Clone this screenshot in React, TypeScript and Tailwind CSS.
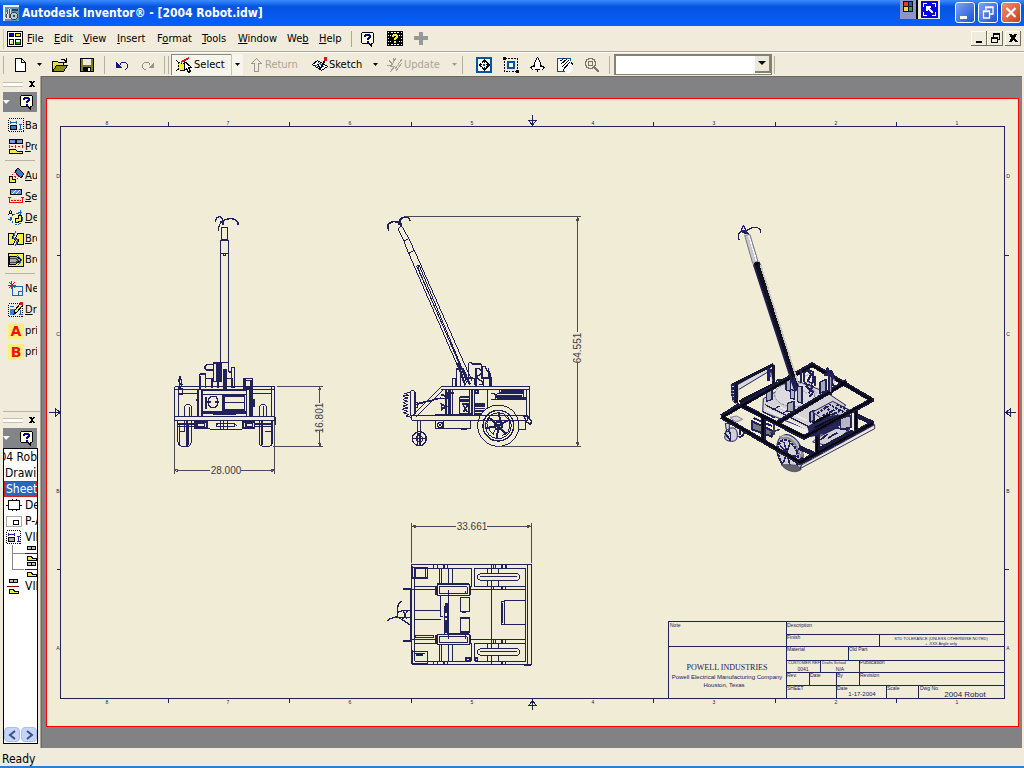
import type { ReactNode } from "react";

const INK = "#20205a";

/* ---------- Small icons ---------- */

function Svg({ w = 16, h = 16, children, className = "" }: { w?: number; h?: number; children: ReactNode; className?: string }) {
  return (
    <svg width={w} height={h} viewBox={`0 0 ${w} ${h}`} fill="none" shapeRendering="crispEdges" className={`shrink-0 ${className}`} aria-hidden="true">
      {children}
    </svg>
  );
}

const AppIcon = () => (
  <Svg>
    <rect width="16" height="16" fill="#5d93b5" />
    <path d="M0 0h16v2H0zM0 0h2v16H0z" fill="#e8f0f4" />
    <path d="M2 14l2-9 2-2 2 2 1 9z" fill="#d5dde0" />
    <path d="M3 13l2-8M7 13L6 4" stroke="#39596b" />
    <circle cx="11" cy="11" r="3.5" fill="#b8c8cd" stroke="#31454f" />
    <circle cx="11" cy="11" r="1" fill="#31454f" />
    <path d="M9 4h6v2H9z" fill="#263c66" />
  </Svg>
);

const DocIcon = () => (
  <Svg>
    <rect x="0.5" y="0.5" width="15" height="15" fill="#fff" stroke="#000" />
    <path d="M2.5 2.5h4v3h-4zM8.5 2.5h5v3h-5zM2.5 8.5h4v5h-4zM8.5 8.5h5v5h-5z" stroke="#000" fill="#fff" />
    <path d="M3 3h3v2H3z" fill="#00c" />
    <path d="M9 3h4v2H9zM4 10h2v3H4z" fill="#f3ec20" />
    <path d="M9 11h4v2H9z" fill="#0a0" />
  </Svg>
);

const HelpBubble = () => (
  <Svg>
    <path d="M2 1h11v1h1v10h-1v1h-1v3h-1l-3-3H2v-1H1V2h1z" fill="#000" />
    <path d="M2 2h11v10h-2v2l-2-2H2z" fill="#fffce0" />
    <path d="M4 4h1V3h5v1h1v3h-1v1H9v1H7V7h1V6h1V5H6v1H4zM7 10h2v2H7z" fill="#00009c" />
  </Svg>
);

const FilmHelp = () => (
  <Svg>
    <path d="M0 0h16v15H0z" fill="#000" />
    <path d="M1 1h1v1H1zM1 4h1v1H1zM1 7h1v1H1zM1 10h1v1H1zM1 13h1v1H1zM14 1h1v1h-1zM14 4h1v1h-1zM14 7h1v1h-1zM14 10h1v1h-1zM14 13h1v1h-1zM4 1h2v1H4zM7 1h2v1H7zM10 1h2v1h-2zM4 13h2v1H4zM7 13h2v1H7zM10 13h2v1h-2zM3 4h1v1H3zM12 4h1v1h-1zM3 10h1v1H3zM12 10h1v1h-1z" fill="#fff" />
    <path d="M5 5V4h1V3h4v1h1v3h-1v1H9v1H7V7h1V6h1V5H7v1H5zM7 10h2v2H7z" fill="#f5ee1e" />
  </Svg>
);

const NewIcon = () => (
  <Svg>
    <path d="M3.5 1.5h6l4 4v9h-10z" fill="#fff" stroke="#000" />
    <path d="M9.5 1.5v4h4" stroke="#000" />
  </Svg>
);

const OpenIcon = () => (
  <Svg>
    <path d="M0.5 13.5v-9h5l1 1h5v3" fill="#e8e04a" stroke="#000" />
    <path d="M0.5 14.5l4-6h11l-4 6z" fill="#8c8a1e" stroke="#000" />
    <path d="M9 2.5h3l2 2M14.5 1v4h-3" stroke="#000" />
  </Svg>
);

const SaveIcon = () => (
  <Svg>
    <path d="M1.5 1.5h13v13h-13z" fill="#7d7a20" stroke="#000" />
    <path d="M4 2h8v6H4z" fill="#f0ead8" />
    <path d="M4 10h8v4H4z" fill="#000" />
    <path d="M9 11h2v3H9z" fill="#f0ead8" />
  </Svg>
);

const UndoIcon = ({ redo = false }: { redo?: boolean }) => (
  <Svg className={redo ? "-scale-x-100" : ""}>
    <path d="M2 5v6h6z" fill={redo ? "#98968c" : "#14148c"} />
    <path d="M5.5 8.5l2-3h4l2 2v3l-2 2h-1" stroke={redo ? "#98968c" : "#14148c"} />
  </Svg>
);

const SelectIcon = () => (
  <Svg w={18}>
    <path d="M2 5l4 2 4-2v7l-4 2-4-2z" fill="#f5ee3a" stroke="#000" strokeDasharray="2 1" />
    <path d="M0 3l2 2M0 14l2-2" stroke="#000" />
    <path d="M5 5l8-4" stroke="#e01010" strokeWidth="1.5" />
    <path d="M8.5 4.5v9l2-2 2 4 2-1-2-4h3z" fill="#fff" stroke="#000" />
  </Svg>
);

const ReturnIcon = () => (
  <Svg>
    <path d="M5.5 14.5v-8h-3l5-5 5 5h-3v8z" stroke="#9a988e" />
  </Svg>
);

const SketchIcon = () => (
  <Svg>
    <path d="M0.5 7.5l5-4 10 6-6 4z" fill="#fff" stroke="#000" />
    <path d="M3 8l7 3M6 5l6 5" stroke="#1070c0" />
    <path d="M5.500 7l3 5M9 11l4-8" stroke="#000" strokeWidth="1.5" />
    <path d="M12 0h3v4h-3z" fill="#e01010" />
  </Svg>
);

const UpdateIcon = () => (
  <Svg>
    <path d="M9 1L4 9h4l-5 6M15 2L8 12M2 3l3 4M0 8h4M6 1v4M9 14l6-8" stroke="#a19f94" />
  </Svg>
);

const ZoomAllIcon = () => (
  <Svg>
    <rect x="1" y="1" width="14" height="14" fill="#fff" stroke="#0054a8" strokeWidth="2" />
    <path d="M5.5 5.5h5v5h-5z" stroke="#000" strokeDasharray="1 1" />
    <path d="M8 2l3 3H5zM8 14l3-3H5zM2 8l3-3v6zM14 8l-3-3v6z" fill="#000" />
    <path d="M7 7h2v2H7z" fill="#0054a8" />
  </Svg>
);

const ZoomWindowIcon = () => (
  <Svg>
    <path d="M1.5 1.5h13v13h-13z" stroke="#000" strokeDasharray="2 1" />
    <path d="M5 5h6v6H5z" fill="#fff" stroke="#0054a8" strokeWidth="2" />
    <path d="M0 0h3v3H0zM13 13h3v3h-3z" fill="#000" />
  </Svg>
);

const ZoomIcon = () => (
  <Svg>
    <path d="M7.5 0.5l3 5v4l4 3-4-1-3 3-3-3-4 1 4-3v-4z" fill="#fff" />
    <path d="M7.5 0.5l-3 5v4M7.5 0.5l3 5v4M4.5 8.5l-4 2 3 3M10.5 8.5l4 2-3 3M5 12.5h5M7.5 12v3" stroke="#000" />
  </Svg>
);

const PanIcon = () => (
  <Svg>
    <path d="M0.5 1.5h13v13h-13z" fill="#fff" stroke="#0054a8" />
    <path d="M4 6l4-4 6 2 2 4v5l-4 3H9z" fill="#fff" />
    <path d="M3 4l5-3M4 7l6-5M5 10l7-7M7 12l6-7M6 14l2-4M14 5l2 3" stroke="#000" />
  </Svg>
);

const LookIcon = () => (
  <Svg>
    <circle cx="6.5" cy="6.5" r="5" stroke="#777565" strokeWidth="1.5" />
    <path d="M4.5 4.5h4v4h-4z" stroke="#777565" />
    <path d="M10 10l5 5" stroke="#777565" strokeWidth="2.5" />
  </Svg>
);

const Caret = ({ dim = false }: { dim?: boolean }) => (
  <svg width="6" height="4" viewBox="0 0 6 4" className="shrink-0" aria-hidden="true">
    <path d="M0 0h5L2.5 3z" fill={dim ? "#a09e92" : "#000"} />
  </svg>
);

/* ---------- Panel icons ---------- */

const BaseIcon = () => (
  <Svg>
    <path d="M0.5 0.5h15v13h-15z" stroke="#000" strokeDasharray="1 1" />
    <path d="M2.5 7.5h6v4h-6z" fill="#2f7fd0" stroke="#000" />
    <path d="M2 4.5h7M2.5 3v3M8.500 3v3M12.5 6v6M11 6.5h3M11 11.5h3" stroke="#1464c0" />
  </Svg>
);
const ProjectedIcon = () => (
  <Svg>
    <path d="M1.5 0.5h6v4h-6zM8.500 0.5h6v4h-6z" fill="#6c9ae8" stroke="#000" />
    <path d="M1.5 6v3M7.5 6v3M14.5 6v3M3 7.5h2M10 7.5h2" stroke="#e01010" />
    <path d="M1.5 14.5v-4h6l2 2h5v2z" fill="#f5ee3a" stroke="#000" />
  </Svg>
);
const AuxiliaryIcon = () => (
  <Svg>
    <path d="M7 4l3-4 6 6-3 4z" fill="#2f7fd0" stroke="#000" />
    <path d="M4 6l6 5M6 4l5 5" stroke="#e01010" strokeDasharray="2 1" />
    <path d="M1.5 14.5v-6h3v3h3v3z" fill="#f5ee3a" stroke="#000" />
  </Svg>
);
const SectionIcon = () => (
  <Svg>
    <path d="M2.5 0.5h11v5h-11z" fill="#5b96e8" stroke="#000" />
    <path d="M4 5l4-4M8 5l4-4" stroke="#fff" />
    <path d="M3 10h10v2H3z" fill="#f5ee3a" />
    <path d="M1.5 8v5.5h13V8M0 8.500h3M13 8.500h3" stroke="#e01010" />
    <path d="M3 11.5h10" stroke="#e01010" strokeDasharray="2 1" />
  </Svg>
);
const DetailIcon = () => (
  <Svg>
    <circle cx="9" cy="9" r="5.5" fill="#fff8b0" stroke="#1464c0" strokeDasharray="3 1" />
    <path d="M7.5 12.5v-4h3v-3h3v6z" fill="#f5ee3a" stroke="#000" />
    <path d="M0.5 5l2-5 2 5M2 3.5h2" stroke="#000" />
    <path d="M0 9h4M2 7v4M10 2h4M12 0v4" stroke="#1464c0" />
  </Svg>
);
const BrokenIcon = () => (
  <Svg>
    <path d="M0.5 2.5h5l-1 5 3 1-2 5h-5zM9.5 2.5h6v11h-6l1-5-3-1z" fill="#f5ee3a" stroke="#000" />
    <path d="M7.5 0l-2 7 4 2-2 6" stroke="#1464c0" />
  </Svg>
);
const BreakOutIcon = () => (
  <Svg>
    <path d="M0.5 1.5h15v13h-15z" fill="#f5ee3a" stroke="#000" />
    <path d="M1 4h7l5 4-5 4H1z" fill="#aaa" stroke="#000" />
    <path d="M2 6.5h6l2 2-2 2H2" stroke="#444" />
    <path d="M9 3l5 5-4 5" stroke="#1464c0" />
  </Svg>
);
const NewSheetIcon = () => (
  <Svg>
    <path d="M4.5 5.5h10v9h-10zM10.5 14v-3.5h4" stroke="#1464c0" />
    <path d="M3.5 0v8M0 4h8M1 1l6 6M7 1L1 7" stroke="#e01010" />
  </Svg>
);
const DraftIcon = () => (
  <Svg>
    <path d="M0.5 1.5h14v13h-14z" stroke="#000" strokeDasharray="1 1" />
    <path d="M2 7h5v6H2z" fill="#2f7fd0" />
    <path d="M2 4.5h4M12.5 8v5M11 12.5h4" stroke="#1464c0" />
    <path d="M6 12l1-4 6-7 2 2-6 7z" fill="#f5ee3a" stroke="#000" />
    <path d="M12 0h3v3h-3z" fill="#e01010" />
  </Svg>
);
const LetterIcon = ({ letter }: { letter: string }) => (
  <span className="flex h-4 w-4 shrink-0 items-center justify-center bg-[#fbf07e] font-['DejaVu_Sans',sans-serif] text-[14px] leading-4 font-bold text-[#f01010]">{letter}</span>
);

const SheetBorderIcon = () => (
  <Svg h={12}>
    <path d="M2.5 1.5h11v9h-11z" fill="#fff" stroke="#000" strokeWidth="1" />
    <path d="M0 6h3M13 6h3M6 0v2M10 0v2M6 10v2M10 10v2" stroke="#000" />
  </Svg>
);
const TitleBlockIcon = () => (
  <Svg h={12}>
    <path d="M0.5 1.5h15v10h-15z" stroke="#aaa" fill="#fff" />
    <path d="M7.5 5.5h5v4h-5z" stroke="#000" />
  </Svg>
);
const ViewIcon = () => (
  <Svg h={14}>
    <path d="M0.5 0.5h14v13h-14z" stroke="#000" strokeDasharray="1 1" />
    <path d="M2.5 7.5h6v4h-6z" fill="#aaa" stroke="#000" />
    <path d="M2 4.5h7M2.5 3v3M8.500 3v3M12.5 6v6M11 6.5h3M11 11.5h3" stroke="#2020b0" />
  </Svg>
);
const ChildViewIcon = () => (
  <Svg w={12} h={16}>
    <path d="M2.5 1.5h4v3h-4zM6.5 1.5h4v3h-4z" fill="#bbb" stroke="#000" />
    <path d="M0 8.500h12" stroke="#800010" />
    <path d="M2.5 15.5v-4h4l1 2h4v2z" fill="#f5ee1e" stroke="#000" />
  </Svg>
);

/* ---------- Chrome ---------- */

function TitleBar() {
  return (
    <header className="flex h-[26px] shrink-0 items-center bg-linear-to-b from-[#3a8cff] via-[#0553e0] via-25% to-[#0560fa] pr-[3px] pl-[3px]">
      <AppIcon />
      <h1 className="ml-[3px] font-['DejaVu_Sans_Condensed','Noto_Sans',sans-serif] text-[12px] leading-4 font-bold whitespace-nowrap text-white">
        Autodesk Inventor® - [2004 Robot.idw]
      </h1>
      <div className="ml-auto flex h-full items-start">
        <div className="flex h-[19px] w-4 items-start justify-center bg-[#8897cf] pt-px">
          <Svg w={10} h={11}>
            <path d="M0 0h10v11H0z" fill="#111" />
            <path d="M1 1h4v4H1z" fill="#e03c24" />
            <path d="M6 1h3v4H6z" fill="#2458d0" />
            <path d="M1 6h4v4H1z" fill="#f5d830" />
            <path d="M6 6h3v4H6z" fill="#30a040" />
          </Svg>
        </div>
        <button aria-label="Capture" className="mr-[11px] flex h-[19px] w-6 items-center justify-center border-l-2 border-black bg-[#ece9d8] pl-px">
          <Svg w={17} h={17}>
            <path d="M0 0h17v17H0z" fill="#0808dc" />
            <path d="M2.5 6v-3.5h3.5M11 2.5h3.5v3.5M2.5 11v3.5h3.5M11 14.5h3.5v-3.5M6 10V6h4M6 6l6 6" stroke="#fff" strokeWidth="1.5" />
          </Svg>
        </button>
        <div className="flex gap-[3px] pt-[2px] pl-1">
          <button aria-label="Minimize" className="h-[21px] w-5 rounded-[3px] border border-white bg-linear-to-br from-[#7ba4f4] to-[#1d4fd0]">
            <svg viewBox="0 0 18 19"><path d="M4 13h7v3H4z" fill="#fff" /></svg>
          </button>
          <button aria-label="Restore" className="h-[21px] w-5 rounded-[3px] border border-white bg-linear-to-br from-[#7ba4f4] to-[#1d4fd0]">
            <svg viewBox="0 0 18 19" fill="none"><path d="M7 7V4h7v7h-3M6 4.500h8M4.5 8h6v7h-6zM4 8.500h7" stroke="#fff" strokeWidth="1.300" /></svg>
          </button>
          <button aria-label="Close" className="h-[21px] w-5 rounded-[3px] border border-white bg-linear-to-br from-[#f0906c] to-[#d03a14]">
            <svg viewBox="0 0 18 19"><path d="M4.5 5l9 9M13.5 5l-9 9" stroke="#fff" strokeWidth="2.200" /></svg>
          </button>
        </div>
      </div>
    </header>
  );
}

const menus: [string, string, string, string][] = [
  ["", "F", "ile", "w-[27px]"],
  ["", "E", "dit", "w-[29px]"],
  ["", "V", "iew", "w-[34px]"],
  ["", "I", "nsert", "w-10"],
  ["F", "o", "rmat", "w-[45px]"],
  ["", "T", "ools", "w-9"],
  ["", "W", "indow", "w-[49px]"],
  ["We", "b", "", "w-8"],
  ["", "H", "elp", "w-8"],
];

function MenuBar() {
  return (
    <div className="flex h-[26px] shrink-0 items-center border-b border-[#aca899] pr-[3px] pl-[3px]">
      <span className="mr-[3px] h-5 w-px bg-[#c9c5b2]" />
      <DocIcon />
      <nav className="ml-1 flex">
        {menus.map(([a, u, b, w]) => (
          <button key={a + u + b} className={`${w} text-left whitespace-nowrap`}>
            {a}<u>{u}</u>{b}
          </button>
        ))}
      </nav>
      <span className="mr-2 h-4 w-px bg-[#aca899]" />
      <div className="flex items-center gap-[11px]">
        <button aria-label="Help topics"><HelpBubble /></button>
        <button aria-label="Show me"><FilmHelp /></button>
        <button aria-label="Add">
          <Svg w={15} h={15}><path d="M5 1h4v4h5v4H9v5H5V9H0V5h5z" fill="#98979c" /></Svg>
        </button>
      </div>
      <div className="ml-auto flex">
        {[
          ["Minimize drawing", "M3 9h6v2H3z"],
          ["Restore drawing", "M4 1h7v7H9v3H2V5h2zM5 3v2h4v2h1V3zM3 7v3h5V7z"],
          ["Close drawing", "M2 2h3l1 2 1-2h3L8 6l3 4H8L6 8l-1 2H2l2-4z"],
        ].map(([label, d], i) => (
          <button key={label} aria-label={label} className={`flex h-[15px] w-4 items-center justify-center border-r border-b border-[#716f64] bg-[#f0ecdc] shadow-[inset_1px_1px_#fff] ${i === 2 ? "ml-[2px]" : ""}`}>
            <Svg w={12} h={12}><path d={d} fill="#000" fillRule="evenodd" /></Svg>
          </button>
        ))}
      </div>
    </div>
  );
}

const Sep = ({ className = "" }: { className?: string }) => <span className={`h-[18px] w-px shrink-0 bg-[#b5b1a0] ${className}`} />;

function ToolBar() {
  return (
    <div className="flex h-6 shrink-0 items-center overflow-hidden border-t border-white pr-[3px] pl-[3px]">
      <Sep className="mr-2" />
      <button aria-label="New"><NewIcon /></button>
      <button aria-label="New options" className="ml-[9px]"><Caret /></button>
      <button aria-label="Open" className="ml-[9px]"><OpenIcon /></button>
      <button aria-label="Save" className="ml-[11px]"><SaveIcon /></button>
      <Sep className="ml-[9px]" />
      <button aria-label="Undo" className="ml-[9px]"><UndoIcon /></button>
      <button aria-label="Redo" className="ml-[10px]"><UndoIcon redo /></button>
      <Sep className="ml-2" />
      <Sep className="ml-[3px]" />
      <button className="ml-[2px] flex h-[21px] w-[60px] items-center border-t border-l border-[#8e8b7e] bg-[#f8f5ec] pl-1">
        <SelectIcon />Select
      </button>
      <button aria-label="Select options" className="flex h-[21px] w-3 items-center justify-center border-l border-[#c9c5b2] bg-[#f8f5ec]"><Caret /></button>
      <button className="ml-[6px] flex w-[61px] items-center text-[#a8a598]"><ReturnIcon />Return</button>
      <button className="ml-[2px] flex w-[61px] items-center gap-px"><SketchIcon />Sketch</button>
      <button aria-label="Sketch options"><Caret /></button>
      <button className="ml-2 flex w-[65px] items-center gap-px text-[#a8a598]"><UpdateIcon />Update</button>
      <button aria-label="Update options"><Caret dim /></button>
      <Sep className="ml-1" />
      <div className="ml-[13px] flex gap-[11px]">
        <button aria-label="Zoom all"><ZoomAllIcon /></button>
        <button aria-label="Zoom window"><ZoomWindowIcon /></button>
        <button aria-label="Zoom"><ZoomIcon /></button>
        <button aria-label="Pan"><PanIcon /></button>
        <button aria-label="Zoom selected"><LookIcon /></button>
      </div>
      <Sep className="ml-[9px]" />
      <div className="relative ml-1 h-[21px] w-[158px]">
        <select aria-label="Style" className="h-full w-full appearance-none border-t-2 border-l-2 border-r border-b border-[#85826f] bg-white">
          <option></option>
        </select>
        <span className="pointer-events-none absolute top-[2px] right-px flex h-[17px] w-4 items-center justify-center border-r-2 border-b-2 border-[#85826f] bg-[#ece9d8]">
          <svg width="8" height="5" viewBox="0 0 8 5" aria-hidden="true"><path d="M0 0h8L4 4z" fill="#000" /></svg>
        </span>
      </div>
      <Sep className="ml-[2px]" />
    </div>
  );
}

function PanelHead({ name }: { name: string }) {
  return (
    <>
      <div className="flex h-4 items-center justify-between">
        <span className="h-[5px] w-5 border-y border-[#c5c1ae] bg-white" />
        <button aria-label={`Close ${name}`} className="mr-[2px]">
          <Svg w={6} h={6}><path d="M0 0h2l1 1 1-1h2L4 3l2 3H4L3 5 2 6H0l2-3z" fill="#000" /></Svg>
        </button>
      </div>
      <div className="flex h-5 shrink-0 items-center justify-between bg-[#83838a]">
        <svg width="8" height="5" viewBox="0 0 8 5" aria-hidden="true"><path d="M0 0h7L3 4z" fill="#fff" /></svg>
        <button aria-label={`${name} help`} className="mr-[2px]"><HelpBubble /></button>
      </div>
    </>
  );
}

const Rule = () => <hr className="mx-[2px] mt-[3px] mb-1 border-t border-[#b9b5a4]" />;

function Tool({ icon, u = "", rest }: { icon: ReactNode; u?: string; rest: string }) {
  return (
    <button className="flex h-[21px] w-full items-center gap-px overflow-hidden pl-[5px] whitespace-nowrap">
      {icon}<span><u>{u}</u>{rest}</span>
    </button>
  );
}

function SidePanels() {
  return (
    <aside className="flex w-[41px] shrink-0 flex-col border-r border-[#a8a594] pl-[3px]">
      <section className="flex h-[336px] flex-col border-b border-[#b9b5a4] pr-[3px]">
        <PanelHead name="Drawing views" />
        <div className="pt-[3px]">
          <Tool icon={<BaseIcon />} rest="Base" />
          <Tool icon={<ProjectedIcon />} u="P" rest="roj" />
          <Rule />
          <Tool icon={<AuxiliaryIcon />} u="A" rest="ux" />
          <Tool icon={<SectionIcon />} u="S" rest="ect" />
          <Tool icon={<DetailIcon />} u="D" rest="et" />
          <Tool icon={<BrokenIcon />} u="B" rest="rok" />
          <Tool icon={<BreakOutIcon />} rest="Brea" />
          <Rule />
          <Tool icon={<NewSheetIcon />} rest="New" />
          <Tool icon={<DraftIcon />} u="D" rest="raft" />
          <Tool icon={<LetterIcon letter="A" />} rest="prin" />
          <Tool icon={<LetterIcon letter="B" />} rest="prin" />
        </div>
      </section>
      <section className="flex flex-1 flex-col pr-[3px] pb-1">
        <PanelHead name="Browser" />
        <div className="flex w-[35px] flex-1 flex-col border border-black bg-white text-[12px] leading-4 whitespace-nowrap">
          <div className="flex-1 overflow-hidden">
            <div className="flex h-4 justify-end"><span>04 Rob</span></div>
            <div className="h-4 pl-px">Drawin</div>
            <div className="h-4 border border-[#d02020] bg-[#2568c0] pl-px leading-[14px] text-white">Sheet</div>
            <div className="flex h-4 items-center gap-[3px] pl-[2px]"><SheetBorderIcon />Def</div>
            <div className="flex h-4 items-center gap-[3px] pl-[2px]"><TitleBlockIcon />P-A</div>
            <div className="flex h-4 items-center gap-[3px] pl-[2px]"><ViewIcon />VIE</div>
            <div className="ml-2 w-3 border-b border-l border-[#888]">
              <div className="flex h-4"><span className="w-3 shrink-0 self-center border-t border-[#888]" /><ChildViewIcon /></div>
              <div className="flex h-2 pl-3"><ChildViewIcon /></div>
            </div>
            <div className="mt-2 flex h-4 items-center gap-[6px] pl-[3px]"><ChildViewIcon />VIE</div>
          </div>
          <div className="flex h-4 gap-px">
            {["M10 3L5 7l5 4", "M5 3l5 4-5 4"].map((d, i) => (
              <button key={d} aria-label={i ? "Scroll right" : "Scroll left"} className="flex h-[15px] flex-1 items-center justify-center rounded-sm border border-[#a9bff0] bg-[#c4d4fb]">
                <svg width="14" height="14" viewBox="0 0 14 14" fill="none"><path d={d} stroke="#405078" strokeWidth="2" /></svg>
              </button>
            ))}
          </div>
        </div>
      </section>
    </aside>
  );
}

/* ---------- Drawing ---------- */

const columnNumbers: [number, string][] = [[107, "8"], [228, "7"], [350, "6"], [472, "5"], [593, "4"], [714, "3"], [836, "2"], [957, "1"]];
const columnTicks = [168, 289, 411, 653, 775, 896];
const rowLetters: [number, string][] = [[176, "D"], [334, "C"], [491, "B"], [648, "A"]];
const rowTicks = [255, 569];

function Border() {
  return (
    <g stroke={INK}>
      <path d="M60.5 126.5h944v572h-944z" />
      {columnTicks.map((x) => <path key={x} d={`M${x}.5 122v4M${x}.5 699v4`} />)}
      {rowTicks.map((y) => <path key={y} d={`M57 ${y}.5h4M1005 ${y}.5h4`} />)}
      <path d="M532.5 115v11M529 120.5h7l-3.5 5zM532.5 698v12M529 705.5h7l-3.5-5zM49 412.5h11M55.5 409v7l5-3.5zM1004 412.5h12M1010.5 409v7l-5-3.5z" />
      <g stroke="none" fill={INK} fontSize="5" textAnchor="middle">
        {columnNumbers.map(([x, n]) => <text key={n} x={x} y="125">{n}</text>)}
        {columnNumbers.map(([x, n]) => <text key={n} x={x} y="704">{n}</text>)}
        {rowLetters.map(([y, n]) => <text key={n} x="58" y={y + 2}>{n}</text>)}
        {rowLetters.map(([y, n]) => <text key={n} x="1008" y={y + 2}>{n}</text>)}
      </g>
    </g>
  );
}

const smallLabels: [number, number, string][] = [
  [670, 627, "Note"], [787, 627, "Description"], [787, 639, "Finish"], [787, 651, "Material"], [849, 651, "Old Part"],
  [860, 664, "Publication"], [787, 677, "Rev."], [810, 677, "Date"],
  [837, 677, "By"], [860, 677, "Revision"], [787, 690, "SHEET"], [837, 690, "Date"], [887, 690, "Scale"], [920, 690, "Dwg No."],
];

function TitleBlock() {
  return (
    <g>
      <path
        stroke={INK}
        d="M668.5 698v-76.5h336M786.5 621v77M786 634.5h218M668 646.5h336M786 660.5h218M786 672.5h218M786 685.5h218M879.5 634v12M848.5 646v14M820.5 660v12M859.5 660v25M809.5 672v13M836.5 672v26M886.5 685v13M918.5 685v13"
      />
      <g fill={INK}>
        <g fontSize="5">
          {smallLabels.map(([x, y, t]) => <text key={`${x}-${y}`} x={x} y={y}>{t}</text>)}
        </g>
        <g fontSize="4">
          <text x="788" y="664">CUSTOMER REF</text>
          <text x="822" y="664">Drafts School</text>
        </g>
        <g textAnchor="middle">
          <g fontSize="4">
            <text x="941" y="640">STD TOLERANCE (UNLESS OTHERWISE NOTED)</text>
            <text x="941" y="645">+ .XXX  Angle only</text>
          </g>
          <g fontSize="5">
            <text x="803" y="671">0041</text>
            <text x="840" y="671">N/A</text>
          </g>
          <text x="727" y="670" fontSize="8" fontFamily="'Liberation Serif', serif">POWELL INDUSTRIES</text>
          <text x="727" y="679" fontSize="6">Powell Electrical Manufacturing Company</text>
          <text x="724" y="687" fontSize="6">Houston, Texas</text>
          <text x="862" y="696" fontSize="6">1-17-2004</text>
          <text x="965" y="697" fontSize="8">2004 Robot</text>
        </g>
      </g>
    </g>
  );
}

/* Each view is drawn on a grid three times finer than the sheet. */
function FrontView() {
  return (
    <g transform="translate(150 200) scale(0.33333)" stroke={INK} strokeWidth="3">
      <path d="M197 66c-1-18 16-20 21-8l3 18M206 94c-2-22 10-36 36-38 18 0 23 8 23 20M212 62l8 14M263 68v8" strokeWidth="4" />
      <path d="M215 82h17v38h-17zM211 121h25v40h-25zM211 161v326h25V161M220 162h8v4h-8z" />
      <path d="M170 494h20v16h-20l-5-4v-8zM190 489h10v56h-10zM200 489h8v54h-8zM208 487h28v30M213 487v58" strokeWidth="4" />
      <path d="M148 566v-38q0-6 6-6h12v42M150 530v36M168 535h18v30M186 545h18v20M222 508h8v56h-8zM236 516h8v48M244 503h9v60h-9zM232 536h14v28M282 536h26v28h-26zM287 541h16v22" strokeWidth="4" />
      <path d="M150 528v38M224 510v52M285 538v24M204 490v54" strokeWidth="6" />
      <path d="M90 530l-4 14 4 6-2 16 8-12-2-14zM86 566h12v18H86z" strokeWidth="4" />
      <path d="M74 560h300v101H74zM86 560v90M364 560v90M74 568h300M86 580h54M310 580h54M74 650h300v12H74z" />
      <path d="M142 570v78M146 570v78M156 570v78M290 570v78M300 570v78M306 570v78" strokeWidth="4" />
      <path d="M156 572h134M158 584h132v50H158zM168 590v36M176 596l8-7h14l4 10v16l-6 8h-12l-8-6zM172 606h10M196 606h10M218 584v50M222 588h62v42h-62zM222 608h62M160 640h130M190 634v8h66v-8M306 600h6v20M138 600h8v20" strokeWidth="4" />
      <path d="M158 636h132" strokeWidth="5" />
      <path d="M104 650v-28q0-9 10-9t10 9v28M118 620v28M328 650v-28q0-9 11-9t11 9v28M340 618v30" />
      <path d="M84 662v65q0 12 10 12h20q10 0 10-12v-65M90 668v68M112 668v66M116 668v68M104 664v30H88M328 662v65q0 12 10 12h18q12 0 12-12v-65M334 668v68M338 668v68M364 664v70M344 694h20v44" />
      <path d="M110 664v74M336 664v72" strokeWidth="6" />
      <path d="M84 672h56M84 680h50M314 672h50M314 680h50M136 666h34v18h-34zM142 670h22v10h-22zM280 666h34v18h-34zM288 670h20v10h-20z" strokeWidth="5" />
      <path d="M172 664v20l18 6h80l10-6M200 670h54v10h-54zM212 662v28M222 662v28M234 662v28M198 676l10-6h40l12 6" />
      <path d="M374 650v24" strokeWidth="6" />
      <g stroke="#4b4b55">
        <path d="M74 664v158M374 664v158M80 811h100M272 811h96M380 560h139M370 740h149M509 564v44M509 694v42" />
        <path d="M74 811l10-4v8zM374 811l-10-4v8zM509 560l-3 10h6zM509 740l-3-10h6z" />
      </g>
    </g>
  );
}

function SideView() {
  return (
    <g transform="translate(370 200) scale(0.33333)" stroke={INK} strokeWidth="3">
      <path d="M57 92c-12-20 8-32 26-25l9 9M86 75c0-26 32-32 34-13M88 58l6 18" strokeWidth="5" />
      <path d="M84 86l10-10 22 39-14 9zM102 124l14-9 17 36-17 10zM116 160l17-9 173 392M116 160l152 350 16 46" />
      <path d="M140 198l7-3 146 350M140 198l140 320M147 195l-3 9 136 316 10 30" />
      <path d="M264 490l22 66M278 504l22 50" strokeWidth="6" />
      <path d="M248 536h10v24h-10zM260 508h12v52h-12z" strokeWidth="5" />
      <path d="M296 488h8l4 4h24l4 8h10l4 10 10 10 4 16v20M296 488v44h12M316 508q10-8 16 2t-6 16 6 16-6 12M336 500v34h20V504M340 538v20M318 504v54M292 536h22v20" strokeWidth="4" />
      <path d="M356 514l6 26v18" strokeWidth="8" />
      <path d="M214 560h266M214 568h266M214 560L125 648M222 568L140 650M480 560v100M470 568v80" />
      <path d="M125 648h348v13H125zM196 643h110v5M235 568v78M247 568v78M304 568v78M314 568v78M352 568v60M268 590v52h36M300 568v78M308 568v78" />
      <path d="M270 592h30M270 600h30M270 604h30M276 612h20v30M280 616l12 20M292 616l-12 20M316 570h8v10h-8zM316 612h28M316 618h28M316 626h28M316 634h26M316 642h20" strokeWidth="5" />
      <path d="M228 570v74M214 584l18 6M212 596h20v-20M214 612l16 8-14 8zM188 600l26-6M140 612l50-12M238 580h14M240 570v74" strokeWidth="5" />
      <path d="M122 572h11v75h-11zM122 578l-20 2 14 6-18 2 16 6-16 4 16 6-16 4 16 6-16 4 16 6-18 4 18 6-14 4 18 6-10 4 14 4M134 604l10 4v14l-10 4M138 614l24-6" strokeWidth="3" />
      <path d="M136 576v66" strokeWidth="5" />
      <path d="M364 600h104M364 582h12v18M388 570h72v8h-72zM372 584l16-4h72v20" />
      <path d="M392 574h66M376 590h80M396 596h70M380 596h88" strokeWidth="8" />
      <circle cx="385" cy="677" r="62" />
      <circle cx="385" cy="677" r="46" strokeWidth="4" />
      <circle cx="385" cy="677" r="39" />
      <circle cx="385" cy="677" r="11" strokeWidth="6" />
      <path d="M385 677l-28-24M385 677l30-16M385 677l24 26M385 677l-4 38M385 677l-38 8M386 640l8 34" strokeWidth="6" />
      <path d="M360 650l-10 20 8 20 16 16M402 646l18 18-4 30-20 14M378 684l-10 22M394 684l10 18M446 662h20v28h-18" />
      <path d="M462 648l8 18 12 8 2-10-10-14z" strokeWidth="4" />
      <path d="M196 662v24h106v-24M204 668h14v14h-14zM206 670l10 10M216 670l-10 10M222 662v22M274 686h16v3h-16z" />
      <path d="M143 662v72M152 662v72M145 700l8 36" />
      <circle cx="148" cy="716" r="21" strokeWidth="4" />
      <circle cx="148" cy="716" r="10" />
      <path d="M129 716h38M148 698v38" strokeWidth="4" />
      <g stroke="#4b4b55">
        <path d="M106 49h526M380 740h252M623 54v342M623 486v248" />
        <path d="M623 50l-3 12h6zM623 739l-3-12h6z" />
      </g>
    </g>
  );
}

function IsometricView() {
  return (
    <g transform="translate(700 210) scale(0.33333)" stroke={INK} strokeWidth="3" strokeLinejoin="round">
      <path d="M117 90c-8-24 16-38 30-16M138 66c18-22 44-16 44 2M125 56l6-8 10 22-14-2z" strokeWidth="4" />
      <path d="M134 76l16-2 24 80-16 6z" fill="#c9c7cb" stroke="#77768a" />
      <path d="M146 76l24 78" stroke="#f1f0f1" strokeWidth="4" />

      {/* rear bumper */}
      <path d="M94 524h14v56l-10-8zM102 530l118-66v12l-106 64" fill="#d9d8df" />
      <path d="M96 526l124-62M118 576l110-56M220 464v58M108 522v58" stroke="#15152c" strokeWidth="10" />
      <path d="M94 526h10M92 536h12M92 546h12M94 556h10M96 566h10M206 474v40M213 478v24" strokeWidth="7" />
      <path d="M124 588l130-72" strokeWidth="8" />
      <path d="M116 530v36M212 488l4 24" stroke="#c9c8d0" />

      {/* deck and machinery */}
      <path d="M190 566l98-54 90 34 60 40-120 70-130-50z" fill="#d6d3d5" />
      <ellipse cx="284" cy="554" rx="60" ry="36" fill="#dddae0" stroke="#7b7a8c" strokeDasharray="8 4" />
      <path d="M196 596l128 62M196 612l96 50M230 586l90 46" stroke="#e9e7e5" strokeWidth="6" />
      <path d="M196 584l130 66M244 612l26-14M218 600l20-12M188 604l36 20" strokeWidth="4" />
      <path d="M200 540l16-4v32l-16 6zM258 504l14 4v36l-14-4zM360 516l18-8v34l-18 8zM262 580l20-6v30h-20zM330 606l12-4v30l-12 4z" fill="#a9aab8" strokeWidth="4" />
      <path d="M312 490q14-16 26-4l2 30-18 10-10-12zM322 482l12 10-10 20 14 18-12 20M316 528l24 18-12 16M304 488v30M346 498v30M228 512l28-4M232 520l30-6" strokeWidth="6" />
      <path d="M314 500l12-8M320 516l14 8M308 540l12 10M340 536l10 14" stroke="#bdbcc6" strokeWidth="4" />
      <path d="M338 606l60-32 58 30-66 40z" fill="#c8c6cb" />
      <path d="M352 610l40-26M368 618l46-24M384 620l40-20M396 588l34 18M374 590l40 28M410 584l36 18" strokeWidth="6" strokeDasharray="7 4" />
      <path d="M324 650l50-30 60-6 20 10-70 44-54 12z" fill="#252556" />
      <path d="M338 640l54-28M344 654l70-34M364 656l70-40" stroke="#0c0c16" strokeWidth="7" />
      <path d="M350 684l60-30 40 4-64 50-48-12z" fill="#d1cfd2" />
      <path d="M362 690l20-18M384 684l28-16M400 652l44 8M420 624l34-8v36l-32 6z" fill="#b7b5bf" strokeWidth="5" />
      <path d="M156 634l60 28v18l-60-22zM160 624l56 24" fill="#77777e" strokeWidth="6" />
      <path d="M200 620l30 16M210 668l30-10M222 636v40" stroke="#3b3b4c" strokeWidth="5" />
      <path d="M276 646l46 22" stroke="#efedee" strokeWidth="8" />

      {/* casters */}
      <path d="M76 640h12v22l-8 4zM92 654q18-4 20 18t-16 22-22-10l4-22z" fill="#d2d1d6" />
      <path d="M84 662q12 8 6 30M74 668l18 24M116 654l20 6-8 18-12 4M120 656v20" strokeWidth="5" />
      <path d="M90 622l20-4 18 10-20 8z" fill="#d5d3d3" stroke="#84838e" />

      {/* main wheel */}
      <ellipse cx="270" cy="728" rx="37" ry="56" transform="rotate(-20 270 728)" fill="#bbb9c0" />
      <ellipse cx="264" cy="734" rx="28" ry="46" transform="rotate(-20 264 734)" fill="#d4d1d3" strokeWidth="7" strokeDasharray="9 3" />
      <path d="M240 706l50 54M252 696l18 70M238 730l56 10M250 760l20-60" strokeWidth="5" />
      <path d="M240 684c30-14 62 24 66 62" stroke="#8c8b96" strokeWidth="11" />
      <path d="M246 680c28-10 52 24 56 52" stroke="#dfdee1" strokeWidth="3" />
      <path d="M244 764c10 16 42 30 60 14l-14-12-26-2z" fill="#62616c" stroke="#55545f" />

      {/* frame */}
      <path d="M300 776l224-120v-12L306 764z" fill="#e8e6ea" stroke="#33334e" />
      <g stroke="#1b1b42" strokeWidth="14">
        <path d="M64 620L336 464L516 570L312 682L120 584" />
        <path d="M64 620l236 138L520 638" />
        <path d="M120 584l-56 36M230 640L440 514M190 618v78M352 674v58M468 600v66M300 758l10-14M468 616l52 24M390 480v76" />
        <path d="M296 712l46 20M360 718l100-54" />
      </g>
      <g stroke="#08080c" strokeWidth="6">
        <path d="M66 621L338 466L514 570L314 681L122 585" />
        <path d="M68 622l232 135L518 640M232 640L440 516M190 622v70M352 680v48M468 604v56" />
      </g>
      <path d="M380 474l8 10v60M394 484l6 10-4 22 6 14M372 494h26" strokeWidth="7" />
      <path d="M392 500v46M402 506v16" stroke="#c7c6d0" />

      {/* mast */}
      <path d="M178 156l120 380-14 8L160 164z" fill="#111118" />
      <path d="M162 164l124 376" stroke="#1d1d55" strokeWidth="4" />
      <path d="M182 166l112 352" stroke="#c7c5c5" strokeWidth="5" />
      <path d="M164 162l12-4" stroke="#000" strokeWidth="8" />
      <path d="M292 530h14v50l-14-6zM272 538l12 4v26l-12-4z" fill="#b6b7c6" strokeWidth="4" />
      <path d="M280 500l10 40M302 480v24" strokeWidth="6" />
    </g>
  );
}

function TopView() {
  return (
    <g transform="translate(370 510) scale(0.33333)" stroke={INK} strokeWidth="3">
      <path d="M125 163h360v300H125zM134 175h170v55H134zM314 175h152v55H314zM134 400h170v54H134zM314 400h152v54H314zM472 163v300M125 238h342M125 388h342M134 230v170M364 163v300M466 175v280" />
      <path d="M190 163v12M202 163v12M232 163v12M222 163v12M396 163v12M408 163v12M370 163v12M376 163v12M190 454v9M202 454v9M222 454v9M232 454v9M396 454v9M406 454v9M370 388v12M376 388v12M396 388v12M406 388v12M370 230v8M396 230v8M406 230v8" strokeWidth="4" />
      <path d="M208 175v50M214 175v50M236 175v50M248 175v50M208 404v50M214 404v50M236 404v50M248 404v50M352 175v55M386 175v55M352 400v54M386 400v54" />
      <path d="M128 172h44v32h-44zM126 168v38M136 172v28M166 172v28M128 424h44v36h-44zM136 430h30M126 420v38" strokeWidth="4" />
      <path d="M140 430h16v5h-16zM288 444h12v8h-12zM316 444h7v8h-7z" strokeWidth="4" />
      <g fill="#f1ecd6">
        <path d="M336 190h104q9 2 9 11t-9 11H336q-14-2-14-11t14-11zM336 415h104q9 2 9 11t-9 11H336q-14-2-14-11t14-11z" />
        <path d="M202 223h96v35h-96zM202 373h96v32h-96z" />
      </g>
      <path d="M330 201h110M330 426h110M208 230h84v22h-84zM208 380h84v18h-84z" />
      <path d="M199 228v26M300 228v26M199 374v28M300 374v28M202 223h96M234 372h64M287 242v10M287 374v12" strokeWidth="5" />
      <path d="M134 301h78M134 328h78M212 256v64h8M224 288v84M236 240v148M136 376h56v6h-56z" />
      <path d="M230 280v30M230 318v6M230 330v38" strokeWidth="9" />
      <path d="M234 278v96" strokeWidth="4" />
      <path d="M271 262h28v42h-28zM271 324h28v42h-28zM276 306h12" strokeWidth="4" />
      <path d="M466 271h-62v74h62M394 274h10v70h-10z" />
      <path d="M396 278v60" strokeWidth="5" />
      <path d="M122 236v156M100 236h22M100 392h22" strokeWidth="6" />
      <path d="M82 320v-20c0-12 6-24 13-26M82 320c-12 2-26 6-30 14M82 320l38 24M84 306l14-4h22M88 322h32M98 304q12 10 0 24M112 304q-12 12 0 22" strokeWidth="4" />
      <path d="M462 464h22" strokeWidth="6" />
      <g stroke="#4b4b55">
        <path d="M125 38v120M485 38v120M130 49h128M350 49h130" />
        <path d="M125 49l12-4v8zM484 49l-12-4v8z" />
      </g>
    </g>
  );
}

function DrawingSheet() {
  return (
    <svg viewBox="47 99 971 627" className="block w-full font-['Liberation_Sans',sans-serif]" fill="none" shapeRendering="crispEdges" role="img" aria-label="2004 Robot drawing">
      <Border />
      <FrontView />
      <SideView />
      <IsometricView />
      <TopView />
      <g fill="#3c3c46" fontSize="10" textAnchor="middle">
        <text x="226" y="474">28.000</text>
        <text x="472" y="530">33.661</text>
        <text x="323" y="418" transform="rotate(-90 323 418)">16.801</text>
        <text x="581" y="348" transform="rotate(-90 581 348)">64.551</text>
      </g>
      <TitleBlock />
    </svg>
  );
}

export default function App() {
  return (
    <div className="flex min-h-screen flex-col bg-[#f0ebdb] font-['DejaVu_Sans_Condensed','Noto_Sans',sans-serif] text-[11px] leading-[14px] text-black">
      <TitleBar />
      <MenuBar />
      <ToolBar />
      <div className="flex flex-1">
        <SidePanels />
        <main className="mr-[2px] min-w-0 flex-1 border-t border-l border-[#6a6960] bg-[#828285] pt-[21px] pr-[3px] pb-[21px] pl-1">
          <div className="border border-[#ff0000] bg-[#f1ecd6]">
            <DrawingSheet />
          </div>
        </main>
      </div>
      <footer className="flex h-5 shrink-0 items-center border-b-2 border-[#3478d8] pt-1 pl-[2px] text-[12px]">Ready</footer>
    </div>
  );
}
